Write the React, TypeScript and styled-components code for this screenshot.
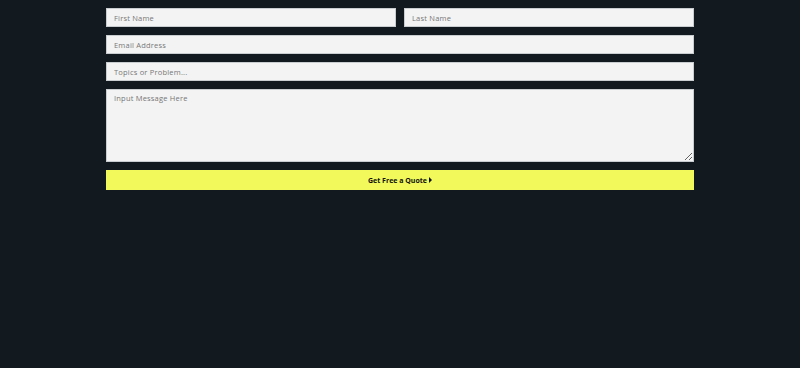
import React from 'react'
import styled, { createGlobalStyle } from 'styled-components'

const GlobalStyle = createGlobalStyle`
    html, body {
        margin: 0;
        padding: 0;
        background: #121a20;
        font-family: "Open Sans", "DejaVu Sans", sans-serif;
    }
`

const Page = styled.div`
    width: 100%;
    min-height: 368px;
    background: #121a20;
    display: flex;
    justify-content: center;
    padding-top: 8px;
    box-sizing: border-box;
`

const Form = styled.form`
    width: 588px;
    display: flex;
    flex-direction: column;
    gap: 8px;
`

const Row = styled.div`
    display: flex;
    gap: 8px;
`

const Field = styled.input<{ $half?: boolean }>`
    flex: ${props => props.$half ? '1 1 0' : 'none'};
    min-width: 0;
    height: 19px;
    box-sizing: border-box;
    padding: 0 7px;
    background: #f3f3f3;
    border: 1px solid #c9cdd0;
    border-radius: 0;
    font-family: "Open Sans", sans-serif;
    font-size: 7.5px;
    letter-spacing: 0.2px;
    color: #333;
    outline: none;
    &::placeholder {
        color: #777;
    }
`

const Message = styled.textarea`
    height: 73px;
    box-sizing: border-box;
    padding: 3px 7px;
    background: #f3f3f3;
    border: 1px solid #c9cdd0;
    border-radius: 0;
    font-family: "Open Sans", sans-serif;
    font-size: 7.5px;
    letter-spacing: 0.2px;
    color: #333;
    outline: none;
    resize: vertical;
    &::placeholder {
        color: #777;
    }
`

const SubmitButton = styled.button`
    height: 20px;
    border: 0;
    background: #f1fa5a;
    color: #111;
    font-family: "Open Sans", sans-serif;
    font-weight: 700;
    font-size: 7px;
    display: flex;
    align-items: center;
    justify-content: center;
    gap: 2px;
    cursor: pointer;
`

const Caret = () => (
    <svg width="3" height="6" viewBox="0 0 3 6">
        <path d="M0 0 L3 3 L0 6 Z" fill="#111" />
    </svg>
)

const App = () => {
    return (
        <>
            <GlobalStyle />
            <Page>
                <Form onSubmit={e => e.preventDefault()}>
                    <Row>
                        <Field $half placeholder='First Name' />
                        <Field $half placeholder='Last Name' />
                    </Row>
                    <Field type='email' placeholder='Email Address' />
                    <Field placeholder='Topics or Problem...' />
                    <Message placeholder='Input Message Here' />
                    <SubmitButton type='submit'>
                        Get Free a Quote
                        <Caret />
                    </SubmitButton>
                </Form>
            </Page>
        </>
    )
}

export default App
